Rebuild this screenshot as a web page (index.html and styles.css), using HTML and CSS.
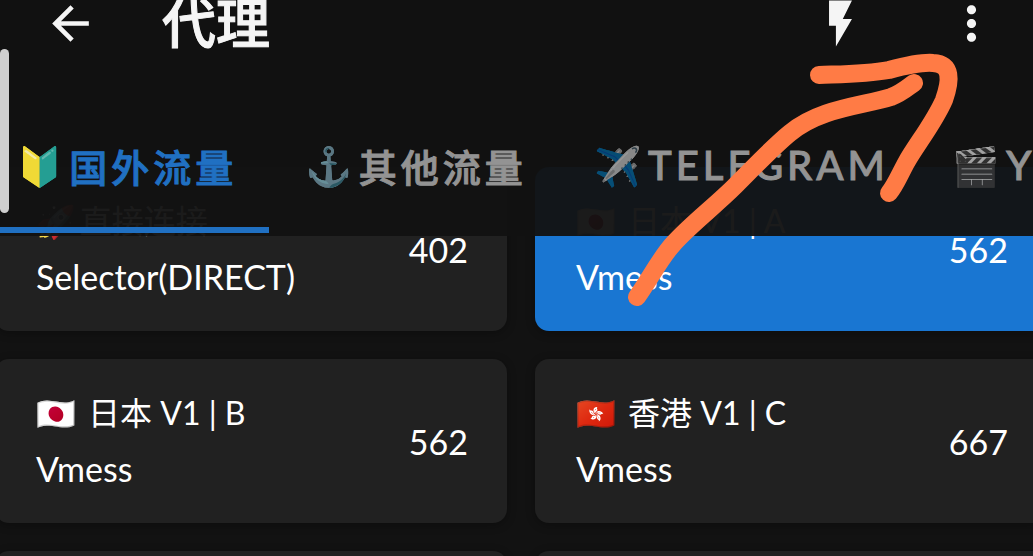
FILE: index.html
```html
<!DOCTYPE html>
<html lang="zh-CN">
<head>
<meta charset="utf-8">
<meta name="viewport" content="width=device-width, initial-scale=1">
<title>代理</title>
<link rel="stylesheet" href="styles.css">
</head>
<body>
<div class="screen">
  <header class="header">
    <div class="toolbar">
      <button class="icon-button" aria-label="返回"><svg viewBox="0 0 24 24"><path d="M20 11H7.83l5.59-5.59L12 4l-8 8 8 8 1.41-1.41L7.83 13H20z"/></svg></button>
      <h1 class="title">代理</h1>
      <button class="icon-button" aria-label="测速"><svg viewBox="0 0 24 24"><path d="M7 2v11h3v9l7-12h-4l4-8z"/></svg></button>
      <button class="icon-button" aria-label="更多"><svg viewBox="0 0 24 24"><path d="M12 8c1.1 0 2-.9 2-2s-.9-2-2-2-2 .9-2 2 .9 2 2 2zm0 2c-1.1 0-2 .9-2 2s.9 2 2 2 2-.9 2-2-.9-2-2-2zm0 6c-1.1 0-2 .9-2 2s.9 2 2 2 2-.9 2-2-.9-2-2-2z"/></svg></button>
    </div>
    <nav class="tabs">
      <button class="tab tab-active"><span class="tab-emoji">🔰</span>国外流量</button>
      <button class="tab"><span class="tab-emoji">⚓</span>其他流量</button>
      <button class="tab tab-latin"><span class="tab-emoji">✈️</span>TELEGRAM</button>
      <button class="tab tab-latin"><span class="tab-emoji">🎬</span>Y</button>
    </nav>
  </header>
  <main class="grid">
    <button class="card"><span class="info"><span class="name"><span class="emoji">🚀</span>直接连接</span><span>Selector(DIRECT)</span></span><span>402</span></button>
    <button class="card card-selected"><span class="info"><span class="name"><span class="emoji">🇯🇵</span> 日本 V1 | A</span><span>Vmess</span></span><span>562</span></button>
    <button class="card"><span class="info"><span class="name"><span class="emoji">🇯🇵</span> 日本 V1 | B</span><span>Vmess</span></span><span>562</span></button>
    <button class="card"><span class="info"><span class="name"><span class="emoji">🇭🇰</span> 香港 V1 | C</span><span>Vmess</span></span><span>667</span></button>
    <div class="card"></div>
    <div class="card"></div>
  </main>
  <div class="scroll-thumb"></div>
  <svg class="drawing" width="1033" height="320" viewBox="0 0 1033 320">
    <path d="M637 297C650 279 660 258 674 243C690 225 716 205 735 186C756 165 775 145 790 133C820 108 862 106 891 97C902 93 908 87 914 83"/>
    <path d="M819 75C848 74 867 74 889 70C908 65 922 62 933 63C952 64 951 80 944 100C934 123 916 145 906 163C899 176 895 186 889 193"/>
  </svg>
</div>
</body>
</html>
```
FILE: styles.css
```css
* { box-sizing: border-box; }

body {
  margin: 0;
  background: #121212;
  color: #fff;
  font-family: Lato, "Noto Sans CJK SC", "Noto Color Emoji", sans-serif;
}

button {
  border: 0;
  color: inherit;
  font: inherit;
  text-align: left;
}

.screen {
  position: relative;
  height: 100vh;
  overflow: hidden;
}

.header {
  position: absolute;
  inset: 0 0 auto;
  z-index: 1;
  padding-bottom: 3px;
  background: rgba(18, 18, 18, 0.96);
}

.toolbar {
  display: flex;
  align-items: center;
  height: 47px;
  padding: 0 34px 0 43px;
}

.icon-button {
  flex: none;
  width: 55px;
  height: 55px;
  padding: 0;
  background: none;
}

.icon-button svg {
  display: block;
  fill: #f5f5f5;
}

.icon-button + .icon-button { margin-left: 76px; }

.title {
  flex: 1;
  margin: 0 0 0 64px;
  color: #f5f5f5;
  font-size: 54px;
  font-weight: 500;
  line-height: 54px;
  -webkit-text-stroke: 1px currentColor;
}

.tabs {
  display: flex;
  margin: 56px 0 0 -20px;
  overflow: hidden;
}

.tab {
  flex: none;
  display: flex;
  align-items: center;
  height: 130px;
  padding: 0 32px 0 36px;
  border-bottom: 6px solid transparent;
  background: none;
  color: #939393;
  font-size: 38px;
  font-weight: 500;
  letter-spacing: 4px;
  -webkit-text-stroke: 1px currentColor;
}

.tab-latin {
  padding-right: 28px;
  font-size: 40px;
}

.tab-active {
  border-color: #2070c2;
  color: #2070c2;
}

.tab-emoji {
  margin-right: 2px;
  font-size: 38px;
  opacity: 0.65;
}

.tab-active .tab-emoji { opacity: 0.95; }

.grid {
  display: grid;
  grid-template-columns: 1fr 1fr;
  gap: 28px;
  margin: 0 -14px 0 -5px;
  padding-top: 167px;
}

.card {
  display: flex;
  align-items: center;
  justify-content: space-between;
  height: 164px;
  padding: 0 39px 0 41px;
  border-radius: 14px;
  background: #212121;
  box-shadow: 0 2px 10px rgba(0, 0, 0, 0.3);
  font-size: 34px;
}

.card-selected { background: #1976d2; }

.info {
  display: flex;
  flex-direction: column;
  gap: 8px;
  line-height: 48px;
}

.name { font-size: 32px; }

.emoji { margin-right: 4px; }

.scroll-thumb {
  position: absolute;
  top: 49px;
  left: 0;
  z-index: 2;
  width: 9px;
  height: 164px;
  border-radius: 5px;
  background: #cfcfcf;
}

.drawing {
  position: absolute;
  top: 0;
  left: 0;
  z-index: 3;
  fill: none;
  stroke: #ff7b45;
  stroke-width: 18px;
  stroke-linecap: round;
  stroke-linejoin: round;
  pointer-events: none;
}
```
